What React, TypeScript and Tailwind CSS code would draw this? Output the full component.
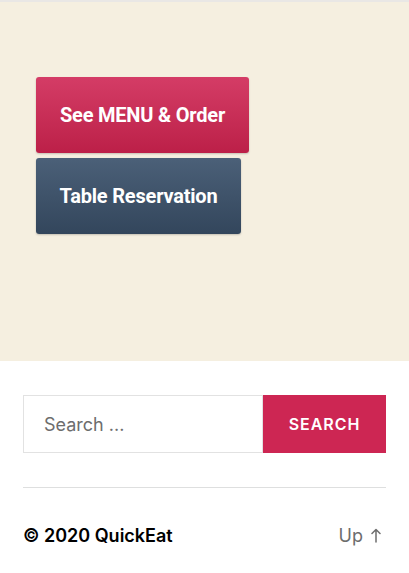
export default function App() {
  return (
    <div className="min-h-[573px] w-full bg-white font-['Inter','Liberation_Sans',sans-serif]">
      {/* Hero strip with the two call-to-action buttons */}
      <section className="h-[361px] border-t-[2px] border-[#e9e7e5] bg-[#f5efe0] px-[36px] pt-[75px]">
        <div className="flex flex-col items-start gap-[5px] font-['Roboto',sans-serif]">
          <a
            href="#"
            className="flex h-[76px] w-[213px] items-center justify-center rounded-[3px] bg-gradient-to-b from-[#d43c66] to-[#bc1f48] text-[20px] font-bold tracking-[-0.01em] text-white shadow-[0_1px_2px_rgba(0,0,0,0.2)]"
          >
            See MENU &amp; Order
          </a>
          <a
            href="#"
            className="flex h-[76px] w-[205px] items-center justify-center rounded-[3px] bg-gradient-to-b from-[#4b6078] to-[#33465c] text-[20px] font-bold tracking-[-0.01em] text-white shadow-[0_1px_2px_rgba(0,0,0,0.2)]"
          >
            Table Reservation
          </a>
        </div>
      </section>

      {/* Search */}
      <div className="px-[23px] pt-[34px]">
        <form className="flex h-[58px]" onSubmit={(e) => e.preventDefault()}>
          <input
            type="search"
            placeholder="Search ..."
            className="h-full w-[240px] border border-[#e2e2e2] bg-white px-[20px] text-[18px] text-black outline-none placeholder:text-[#6d6d6d]"
          />
          <button
            type="submit"
            className="h-full flex-1 bg-[#cd2653] text-[16px] font-semibold uppercase tracking-[0.06em] text-white"
          >
            Search
          </button>
        </form>

        <hr className="mt-[34px] border-t border-[#dedfdf]" />

        {/* Footer */}
        <footer className="flex items-center justify-between pt-[34px]">
          <p className="text-[18px] font-semibold text-black">© 2020 QuickEat</p>
          <a href="#" className="flex items-center gap-[8px] pr-[5px] text-[18px] text-[#6d6d6d]">
            Up
            <svg width="10" height="15" viewBox="0 0 10 15" fill="none" stroke="currentColor" strokeWidth="1.5" strokeLinecap="round" strokeLinejoin="round" aria-hidden>
              <path d="M5 14V1.5M1 5.5l4-4 4 4" />
            </svg>
          </a>
        </footer>
      </div>
    </div>
  );
}
